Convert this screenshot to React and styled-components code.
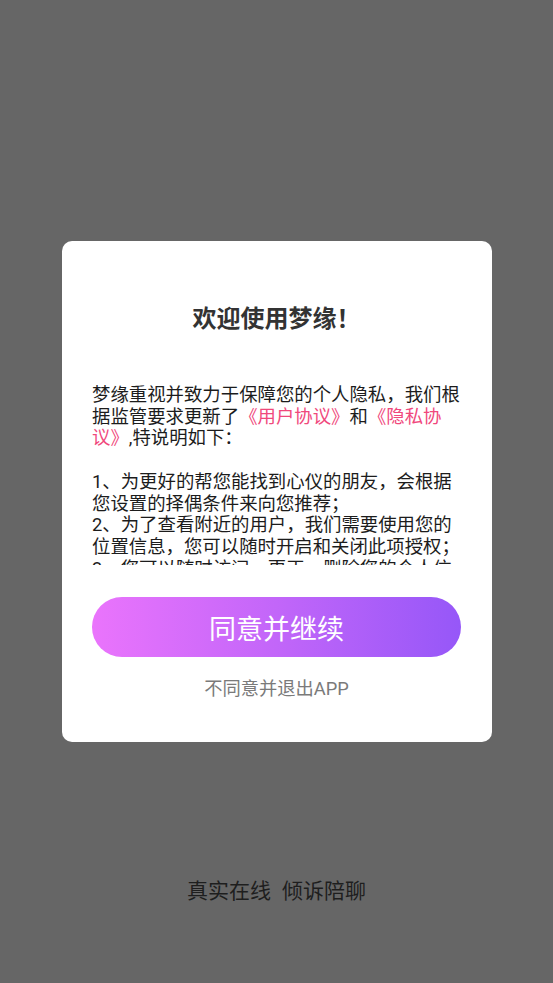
import React from "react";
import styled, { createGlobalStyle } from "styled-components";

const GlobalStyle = createGlobalStyle`
  html, body {
    margin: 0;
    padding: 0;
    background: #666666;
  }
  body {
    font-family: Roboto, "Noto Sans CJK SC", sans-serif;
  }
  * { box-sizing: border-box; }
`;

const Page = styled.div`
  height: 100vh;
  display: flex;
  flex-direction: column;
  justify-content: flex-end;
  align-items: center;
  padding-bottom: 78px;
  background: #666666;
`;

const Slogan = styled.div`
  display: flex;
  gap: 11px;
  font-size: 21px;
  line-height: 28px;
  color: #1e1e1e;
`;

const Overlay = styled.div`
  position: fixed;
  inset: 0;
  display: flex;
  align-items: center;
  justify-content: center;
`;

const Dialog = styled.div`
  width: 430px;
  height: 501px;
  background: #ffffff;
  border-radius: 10px;
  padding: 62px 30.5px 0;
  display: flex;
  flex-direction: column;
  align-items: stretch;
`;

const Title = styled.h2`
  margin: 0;
  text-align: center;
  font-size: 24px;
  line-height: 32px;
  font-weight: 700;
  color: #333333;
`;

const Body = styled.div`
  margin-top: 49px;
  height: 181px;
  overflow-y: auto;
  scrollbar-width: none;
  &::-webkit-scrollbar { display: none; }
`;

const Paragraph = styled.p`
  margin: ${(p) => (p.$gap ? "21.7px" : "0")} 0 0;
  font-size: 18.4px;
  line-height: 21.7px;
  color: #1c1c1c;
  word-break: break-all;
`;

const Link = styled.span`
  color: #f0487c;
`;

const PrimaryButton = styled.button`
  margin-top: 32px;
  height: 60px;
  border: none;
  border-radius: 30px;
  background: linear-gradient(90deg, #ea74fc 0%, #c266f9 50%, #9657f8 100%);
  color: #ffffff;
  font-family: Roboto, "Noto Sans CJK SC", sans-serif;
  font-size: 27px;
  font-weight: 400;
  cursor: pointer;
`;

const SecondaryButton = styled.button`
  margin-top: 20px;
  border: none;
  background: transparent;
  padding: 0;
  font-family: Roboto, "Noto Sans CJK SC", sans-serif;
  font-size: 18.3px;
  line-height: 24px;
  color: #7a7a7a;
  cursor: pointer;
`;

export default function App() {
  return (
    <>
      <GlobalStyle />
      <Page>
        <Slogan>
          <span>真实在线</span>
          <span>倾诉陪聊</span>
        </Slogan>
      </Page>
      <Overlay>
        <Dialog>
          <Title>欢迎使用梦缘！</Title>
          <Body>
            <Paragraph>
              梦缘重视并致力于保障您的个人隐私，我们根据监管要求更新了
              <Link>《用户协议》</Link>和<Link>《隐私协议》</Link>,特说明如下：
            </Paragraph>
            <Paragraph $gap>
              1、为更好的帮您能找到心仪的朋友，会根据您设置的择偶条件来向您推荐；
            </Paragraph>
            <Paragraph>
              2、为了查看附近的用户，我们需要使用您的位置信息，您可以随时开启和关闭此项授权；
            </Paragraph>
            <Paragraph>
              3、您可以随时访问、更正、删除您的个人信息，同时我们也提供了账号注销的渠道；
            </Paragraph>
            <Paragraph>
              4、未经您的同意，我们不会向第三方共享、转让您的个人信息。
            </Paragraph>
          </Body>
          <PrimaryButton>同意并继续</PrimaryButton>
          <SecondaryButton>不同意并退出APP</SecondaryButton>
        </Dialog>
      </Overlay>
    </>
  );
}
